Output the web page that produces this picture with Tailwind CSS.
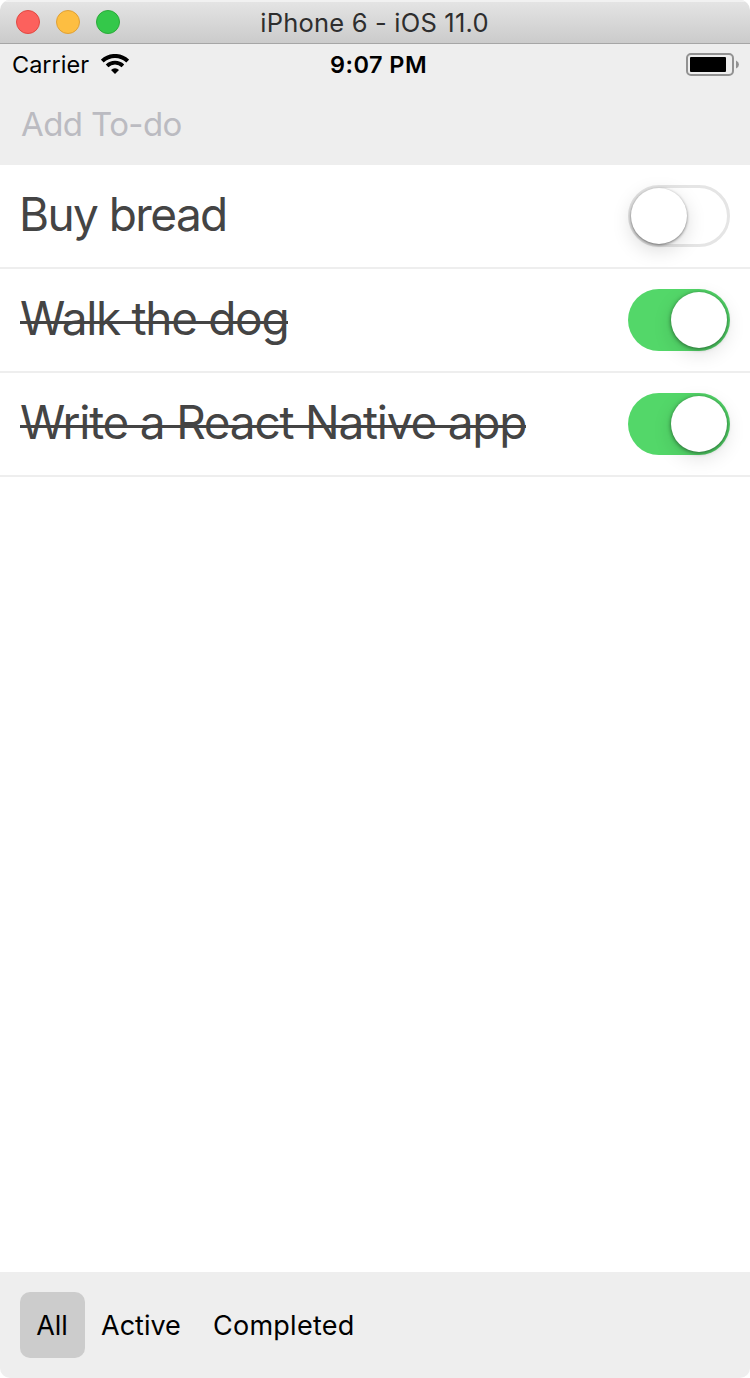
<!DOCTYPE html>
<html lang="en">
<head>
<meta charset="utf-8">
<title>iPhone 6 - iOS 11.0</title>
<script src="https://cdn.jsdelivr.net/npm/@tailwindcss/browser@4"></script>
</head>
<body class="bg-white font-['Inter','Liberation_Sans',sans-serif]">
<div class="flex h-[1378px] w-[750px] flex-col overflow-hidden rounded-t-[10px] rounded-b-[10px] bg-white">
  <header class="relative flex h-11 shrink-0 items-center justify-center border-b border-[#a6a6a6] bg-linear-to-b from-[#e5e5e5] to-[#cbcbcb] shadow-[inset_0_2px_0_#f1f1f1]">
    <div class="absolute top-[10px] left-4 flex gap-4">
      <span class="size-6 rounded-full border border-[#e14942] bg-[#fc615d]"></span>
      <span class="size-6 rounded-full border border-[#dfa036] bg-[#fdbe41]"></span>
      <span class="size-6 rounded-full border border-[#2caa3a] bg-[#34c84a]"></span>
    </div>
    <h1 class="pt-[3px] pr-px text-[25.5px] leading-none tracking-[0.2px] whitespace-nowrap text-[#2e2e2e]">iPhone 6 - iOS 11.0</h1>
  </header>
  <div class="relative flex h-[42px] shrink-0 items-center justify-between bg-[#eeeeee] pr-[11px] pl-3 text-[23.5px] leading-none text-black">
    <div class="flex items-center gap-3">
      <span>Carrier</span>
      <svg class="mb-0.5 h-5 w-7" viewBox="0 0 28 20" fill="none" stroke="#000">
        <path d="M1.3 7.1a18.2 18.2 0 0 1 25.4 0" stroke-width="4"/>
        <path d="M6.1 11.9a11.4 11.4 0 0 1 15.8 0" stroke-width="3.8"/>
        <path d="M14 20l-4-4.1a5.8 5.8 0 0 1 8 0z" fill="#000" stroke="none"/>
      </svg>
    </div>
    <span class="absolute left-[330px] font-semibold tracking-[0.45px] whitespace-nowrap">9:07 PM</span>
    <svg class="h-6 w-[54px]" viewBox="0 0 54 24">
      <rect x="2" y="1" width="46" height="21" rx="4" fill="none" stroke="#929292" stroke-width="2"/>
      <rect x="5" y="4" width="36" height="15" rx="1" fill="#000"/>
      <path d="M51 7.500q3 1.500 3 4t-3 4z" fill="#929292"/>
    </svg>
  </div>
  <div class="flex h-[79px] shrink-0 items-center bg-[#eeeeee] pb-0.5 pl-[21px] text-[33px] leading-none tracking-[-0.6px] text-[#bbbbc1]"><span>Add To-do</span></div>
  <ul class="flex-1">
    <li class="flex h-[104px] items-center justify-between border-b-2 border-[#eeeeee] px-5 text-[46px] leading-[46px] text-[#444444]">
      <span class="relative -left-px pb-1 tracking-[-1.6px]">Buy bread</span>
      <span class="flex h-[62px] w-[102px] items-center rounded-full border-3 border-[#e5e5e5]"><span class="size-14 rounded-full bg-white shadow-[0_1px_3px_rgba(0,0,0,0.5),0_6px_20px_rgba(0,0,0,0.15)]"></span></span>
    </li>
    <li class="flex h-[104px] items-center justify-between border-b-2 border-[#eeeeee] px-5 text-[46px] leading-[46px] text-[#444444]">
      <span class="relative pb-1 tracking-[-1.32px] after:absolute after:inset-x-0 after:top-[26px] after:h-[3px] after:bg-[#444444]">Walk the dog</span>
      <span class="flex h-[62px] w-[102px] items-center justify-end rounded-full bg-[#53d769] px-[3px]"><span class="size-14 rounded-full bg-white shadow-[0_1px_4px_rgba(0,0,0,0.5),0_6px_20px_rgba(0,0,0,0.12)]"></span></span>
    </li>
    <li class="flex h-[104px] items-center justify-between border-b-2 border-[#eeeeee] px-5 text-[46px] leading-[46px] text-[#444444]">
      <span class="relative pb-1 tracking-[-1.24px] after:absolute after:inset-x-0 after:top-[26px] after:h-[3px] after:bg-[#444444]">Write a React Native app</span>
      <span class="flex h-[62px] w-[102px] items-center justify-end rounded-full bg-[#53d769] px-[3px]"><span class="size-14 rounded-full bg-white shadow-[0_1px_4px_rgba(0,0,0,0.5),0_6px_20px_rgba(0,0,0,0.12)]"></span></span>
    </li>
  </ul>
  <footer class="flex h-[106px] shrink-0 items-center bg-[#eeeeee] pl-5 text-[27px] leading-none text-black">
    <button class="flex h-[66px] w-[65px] items-center justify-center rounded-[10px] bg-[#cccccc] pr-px">All</button>
    <button class="ml-4 w-[80px] text-left">Active</button>
    <button class="ml-8 text-left tracking-[0.25px]">Completed</button>
  </footer>
</div>
</body>
</html>
